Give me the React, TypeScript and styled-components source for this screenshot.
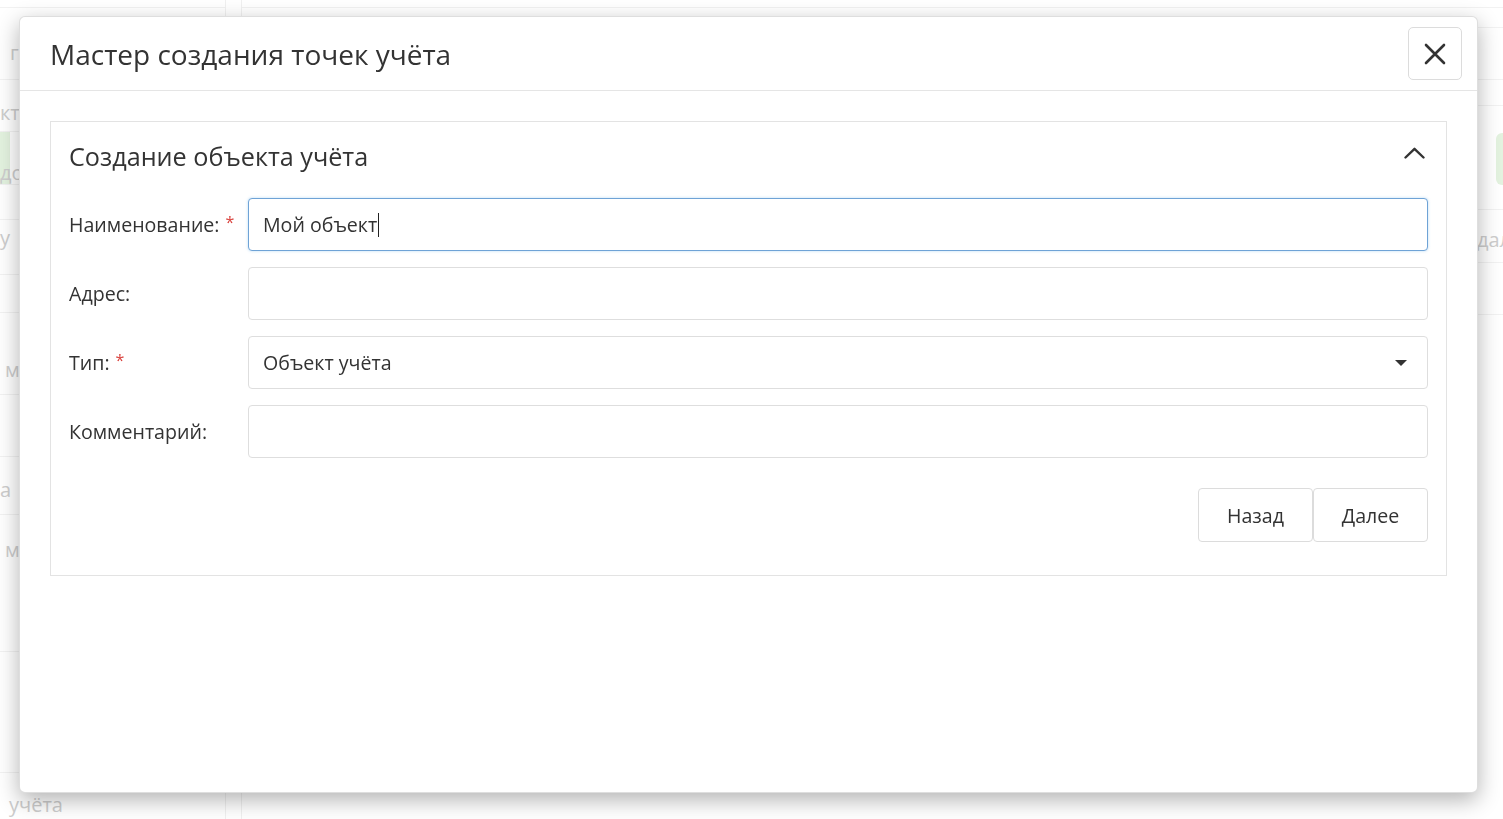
import React from "react";
import styled, { createGlobalStyle } from "styled-components";

const GlobalStyle = createGlobalStyle`
  html, body { margin: 0; padding: 0; width: 100%; height: 100%; overflow: hidden; background: #fff; }
  body { font-family: "Open Sans", "Noto Sans", sans-serif; color: #333; }
  * { box-sizing: border-box; }
`;

/* ---------- faded page behind the modal ---------- */
const Page = styled.div`
  display: grid;
  grid-template-columns: 226px 16px 1fr;
  height: 819px;
  overflow: hidden;
`;

const Sidebar = styled.div`
  display: flex;
  flex-direction: column;
  border-right: 1px solid #f0f0f0;
  overflow: hidden;
`;

const Gutter = styled.div`
  border-right: 1px solid #f0f0f0;
`;

const Content = styled.div`
  display: flex;
  flex-direction: column;
  overflow: hidden;
`;

const BgRow = styled.div<{ $h: number; $pad?: number; $tint?: boolean; $end?: boolean }>`
  flex: none;
  height: ${(p) => p.$h}px;
  display: flex;
  align-items: flex-start;
  justify-content: ${(p) => (p.$end ? "flex-end" : "flex-start")};
  padding-top: ${(p) => p.$pad ?? 0}px;
  border-bottom: 1px solid #f2f2f2;
  background: ${(p) => (p.$tint ? "linear-gradient(to right, #e3f2df 0 10px, transparent 10px)" : "transparent")};
`;

const BgText = styled.span<{ $shift?: number }>`
  margin-left: ${(p) => p.$shift ?? 0}px;
  font-size: 20px;
  line-height: 20px;
  color: #cdcdcd;
  white-space: nowrap;
`;

const BgBadge = styled.span`
  width: 60px;
  height: 52px;
  margin-right: -53px;
  border-radius: 6px;
  background: #e3f2df;
`;

/* ---------- modal ---------- */
const Modal = styled.div`
  position: fixed;
  top: 16px;
  left: 19px;
  width: 1459px;
  height: 777px;
  display: flex;
  flex-direction: column;
  background: #fff;
  border: 1px solid rgba(0, 0, 0, 0.13);
  border-radius: 6px;
  box-shadow: 0 7px 22px rgba(0, 0, 0, 0.3);
`;

const Header = styled.div`
  flex: none;
  height: 74px;
  display: flex;
  align-items: center;
  justify-content: space-between;
  padding: 0 15px 0 30px;
  border-bottom: 1px solid #e5e5e5;
`;

const Title = styled.h4`
  margin: 0;
  font-size: 28px;
  font-weight: 400;
  color: #333;
`;

const CloseButton = styled.button`
  width: 54px;
  height: 53px;
  padding: 0;
  display: flex;
  align-items: center;
  justify-content: center;
  background: #fff;
  border: 1px solid #dcdcdc;
  border-radius: 5px;
  cursor: pointer;
`;

const Body = styled.div`
  flex: 1;
  padding: 30px;
`;

const Panel = styled.section`
  border: 1px solid #e3e3e3;
  padding: 0 18px 33px 18px;
`;

const PanelHead = styled.div`
  height: 68px;
  margin-bottom: 8px;
  display: flex;
  align-items: center;
  justify-content: space-between;
`;

const PanelTitle = styled.h5`
  margin: 0;
  font-size: 25.2px;
  font-weight: 400;
  color: #333;
`;

const Chevron = styled.svg`
  margin: -6px 3px 0 0;
`;

const Form = styled.div`
  display: grid;
  grid-template-columns: 179px 1fr;
  row-gap: 16px;
`;

const Label = styled.label`
  display: flex;
  align-items: center;
  font-size: 19.6px;
  color: #333;
`;

const Required = styled.span`
  margin-left: 6px;
  margin-top: -6px;
  font-size: 16px;
  color: #d9413c;
`;

const Field = styled.div<{ $focused?: boolean }>`
  height: 53px;
  display: flex;
  align-items: center;
  justify-content: space-between;
  padding: 0 20px 0 14px;
  font-size: 19.6px;
  color: #333;
  background: #fff;
  border: 1px solid ${(p) => (p.$focused ? "#6fa3d6" : "#dedede")};
  border-radius: 4px;
  box-shadow: ${(p) => (p.$focused ? "0 0 3px rgba(102, 175, 233, 0.45)" : "none")};
`;

const Value = styled.span`
  display: flex;
  align-items: center;
`;

const Caret = styled.span`
  display: inline-block;
  width: 1px;
  height: 24px;
  margin-left: 1px;
  background: #222;
`;

const SelectArrow = styled.span`
  width: 0;
  height: 0;
  border-left: 6px solid transparent;
  border-right: 6px solid transparent;
  border-top: 6px solid #333;
`;

const Actions = styled.div`
  display: flex;
  justify-content: flex-end;
  margin-top: 30px;
`;

const Button = styled.button`
  width: 115px;
  height: 54px;
  font-family: inherit;
  font-size: 19.6px;
  color: #333;
  background: #fff;
  border: 1px solid #dcdcdc;
  border-radius: 4px;
  cursor: pointer;
`;

export default function App() {
  return (
    <>
      <GlobalStyle />
      <Page>
        <Sidebar>
          <BgRow $h={8} />
          <BgRow $h={72} $pad={35}>
            <BgText $shift={10}>г</BgText>
          </BgRow>
          <BgRow $h={52} $pad={23}>
            <BgText $shift={0}>кт</BgText>
          </BgRow>
          <BgRow $h={53} $pad={31} $tint>
            <BgText $shift={0}>до</BgText>
          </BgRow>
          <BgRow $h={35} />
          <BgRow $h={55} $pad={8}>
            <BgText $shift={0}>у</BgText>
          </BgRow>
          <BgRow $h={38} />
          <BgRow $h={82} $pad={47}>
            <BgText $shift={5}>м</BgText>
          </BgRow>
          <BgRow $h={62} />
          <BgRow $h={58} $pad={23}>
            <BgText $shift={0}>а</BgText>
          </BgRow>
          <BgRow $h={137} $pad={25}>
            <BgText $shift={5}>м</BgText>
          </BgRow>
          <BgRow $h={121} />
          <BgRow $h={60} $pad={22}>
            <BgText $shift={9}>учёта</BgText>
          </BgRow>
        </Sidebar>
        <Gutter />
        <Content>
          <BgRow $h={8} />
          <BgRow $h={20} />
          <BgRow $h={52} />
          <BgRow $h={26} />
          <BgRow $h={104} $pad={27} $end>
            <BgBadge />
          </BgRow>
          <BgRow $h={53} $pad={20}>
            <BgText $shift={1235}>дал</BgText>
          </BgRow>
          <BgRow $h={52} />
        </Content>
      </Page>

      <Modal role="dialog">
        <Header>
          <Title>Мастер создания точек учёта</Title>
          <CloseButton aria-label="Закрыть">
            <svg width="22" height="22" viewBox="0 0 22 22">
              <path d="M2 2 L20 20 M20 2 L2 20" stroke="#333" strokeWidth="2.6" strokeLinecap="round" fill="none" />
            </svg>
          </CloseButton>
        </Header>
        <Body>
          <Panel>
            <PanelHead>
              <PanelTitle>Создание объекта учёта</PanelTitle>
              <Chevron width="21" height="12" viewBox="0 0 21 12">
                <path d="M1.5 10.5 L10.5 1.8 L19.5 10.5" stroke="#333" strokeWidth="2.4" fill="none" strokeLinecap="round" strokeLinejoin="round" />
              </Chevron>
            </PanelHead>
            <Form>
              <Label>
                Наименование:<Required>*</Required>
              </Label>
              <Field $focused>
                <Value>
                  Мой объект
                  <Caret />
                </Value>
              </Field>

              <Label>Адрес:</Label>
              <Field />

              <Label>
                Тип:<Required>*</Required>
              </Label>
              <Field>
                <Value>Объект учёта</Value>
                <SelectArrow />
              </Field>

              <Label>Комментарий:</Label>
              <Field />
            </Form>
            <Actions>
              <Button>Назад</Button>
              <Button>Далее</Button>
            </Actions>
          </Panel>
        </Body>
      </Modal>
    </>
  );
}
